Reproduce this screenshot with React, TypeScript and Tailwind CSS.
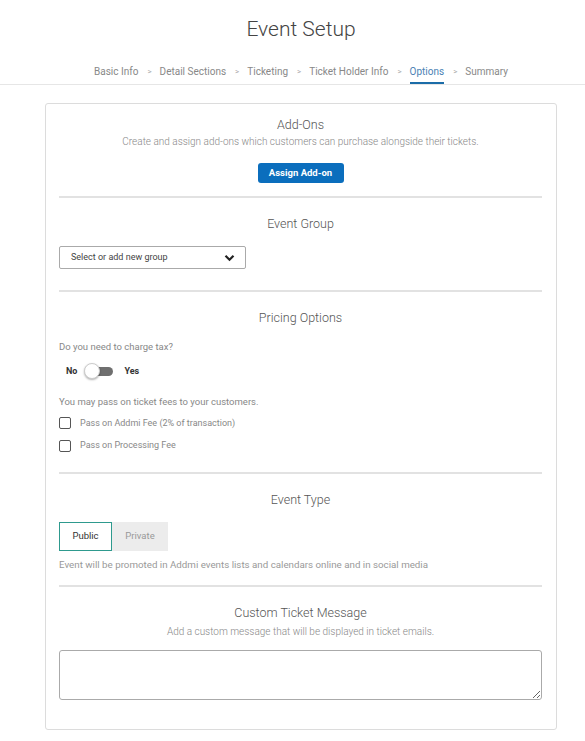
import { useState } from 'react'

const steps = ['Basic Info', 'Detail Sections', 'Ticketing', 'Ticket Holder Info', 'Options', 'Summary']

function SectionTitle({ title, sub }: { title: string; sub?: string }) {
  return (
    <div className="text-center">
      <h2 className="text-[12.5px] font-light text-[#555] leading-[16px]">{title}</h2>
      {sub && <p className="mt-[3px] text-[10px] font-light text-[#888] leading-[12px]">{sub}</p>}
    </div>
  )
}

function Divider() {
  return <div className="h-[2px] bg-[#e2e2e2]" />
}

export default function App() {
  const [tax, setTax] = useState(false)
  const [eventType, setEventType] = useState('public')

  return (
    <div className="min-h-[741px] overflow-hidden bg-white font-['Roboto',sans-serif] text-[#333]">
      <div className="w-[602px]">
        <h1 className="pt-[15px] text-center text-[21px] font-light leading-[28px] text-[#444]">Event Setup</h1>

        <div className="mt-[22px] border-b border-[#e6e6e6]">
          <div className="flex justify-center gap-[8px] text-[10px] text-[#888]">
            {steps.map((s, i) => (
              <div key={s} className="flex items-center gap-[9px]">
                <span
                  className={`pb-[4px] border-b-2 leading-[13px] ${
                    s === 'Options' ? 'border-[#1b6ca8] text-[#4a82b4]' : 'border-transparent'
                  }`}
                >
                  {s}
                </span>
                {i < steps.length - 1 && <span className="pb-[6px] text-[8px] text-[#aaa]">&gt;</span>}
              </div>
            ))}
          </div>
        </div>

        <div className="mx-[45px] mt-[18px] rounded-[3px] border border-[#dcdcdc] pl-[13px] pr-[14px] pb-[29px]">
          {/* Add-ons */}
          <div className="pt-[13px] pb-[13px]">
            <SectionTitle
              title="Add-Ons"
              sub="Create and assign add-ons which customers can purchase alongside their tickets."
            />
            <div className="mt-[15px] flex justify-center">
              <button className="h-[20px] w-[86px] rounded-[3px] bg-[#0b6ebd] text-[9.5px] font-bold text-white">
                Assign Add-on
              </button>
            </div>
          </div>
          <Divider />

          {/* Event Group */}
          <div className="pt-[18px] pb-[21px]">
            <SectionTitle title="Event Group" />
            <div className="mt-[14px] flex h-[23px] w-[187px] items-center justify-between rounded-[2px] border border-[#aaa] px-[11px] text-[9px] text-[#444]">
              <span>Select or add new group</span>
              <svg width="11" height="8" viewBox="0 0 11 8" className="mr-[-1px]">
                <path d="M1.5 1.8 L5.5 5.8 L9.5 1.8" fill="none" stroke="#222" strokeWidth="2.2" />
              </svg>
            </div>
          </div>
          <Divider />

          {/* Pricing */}
          <div className="pt-[18px] pb-[19px]">
            <SectionTitle title="Pricing Options" />
            <p className="mt-[14px] text-[9.5px] text-[#888]">Do you need to charge tax?</p>
            <div className="mt-[9px] flex items-center pl-[7px] text-[9px] font-bold text-[#333]">
              <span>No</span>
              <button onClick={() => setTax(!tax)} className="relative ml-[7px] h-[16px] w-[30px]">
                <span className="absolute left-[6px] top-[4px] h-[9px] w-[23px] rounded-full bg-[#6f6f6f]" />
                <span
                  className={`absolute top-0 h-[16px] w-[16px] rounded-full border border-[#ccc] bg-white shadow-[0_1px_2px_rgba(0,0,0,0.3)] ${
                    tax ? 'left-[14px]' : 'left-0'
                  }`}
                />
              </button>
              <span className="ml-[10px]">Yes</span>
            </div>
            <p className="mt-[16px] text-[9.5px] text-[#888]">You may pass on ticket fees to your customers.</p>
            <label className="mt-[7px] flex items-center gap-[9px] text-[9px] text-[#888]">
              <span className="h-[12px] w-[12px] rounded-[2px] border border-[#555] bg-white" />
              Pass on Addmi Fee (2% of transaction)
            </label>
            <label className="mt-[9px] flex items-center gap-[9px] text-[9px] text-[#888]">
              <span className="h-[12px] w-[12px] rounded-[2px] border border-[#555] bg-white" />
              Pass on Processing Fee
            </label>
          </div>
          <Divider />

          {/* Event type */}
          <div className="pt-[18px] pb-[13px]">
            <SectionTitle title="Event Type" />
            <div className="mt-[14px] flex">
              <button
                onClick={() => setEventType('public')}
                className={`h-[29px] w-[53px] text-[9.5px] ${
                  eventType === 'public' ? 'border border-[#2e9a8e] bg-white text-[#333]' : 'bg-[#ececec] text-[#999]'
                }`}
              >
                Public
              </button>
              <button
                onClick={() => setEventType('private')}
                className={`h-[29px] w-[56px] text-[9.5px] ${
                  eventType === 'private' ? 'border border-[#2e9a8e] bg-white text-[#333]' : 'bg-[#ececec] text-[#999]'
                }`}
              >
                Private
              </button>
            </div>
            <p className="mt-[7px] text-[9.75px] text-[#999]">
              Event will be promoted in Addmi events lists and calendars online and in social media
            </p>
          </div>
          <Divider />

          {/* Custom message */}
          <div className="pt-[18px]">
            <div className="text-center">
              <h2 className="text-[12.5px] font-light leading-[16px] text-[#555]">Custom Ticket Message</h2>
              <p className="mt-[5px] text-[10px] font-light leading-[12px] text-[#888]">
                Add a custom message that will be displayed in ticket emails.
              </p>
            </div>
            <textarea className="mt-[12px] block h-[50px] w-full rounded-[3px] border border-[#aaa] outline-none" />
          </div>
        </div>
      </div>
    </div>
  )
}
